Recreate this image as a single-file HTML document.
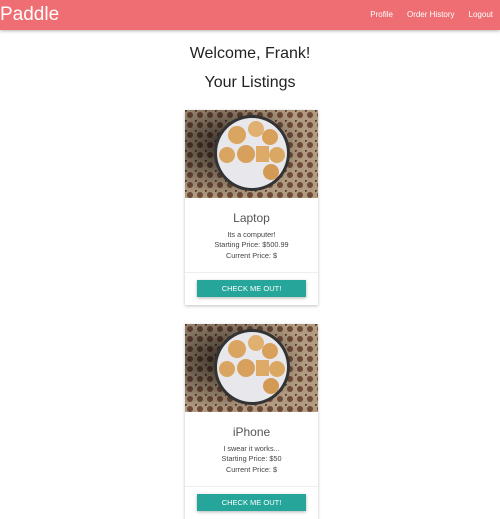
<!DOCTYPE html>
<html><head><style>
*{margin:0;padding:0;box-sizing:border-box}
body{width:500px;height:500px;overflow:hidden;background:#fff;font-family:"Liberation Sans",sans-serif;position:relative}
.nav{position:absolute;left:0;top:0;width:500px;height:30px;background:#ee6e73;box-shadow:0 1px 3px rgba(0,0,0,.3);color:#fff}
.brand{position:absolute;left:0;top:4px;font-size:19px}
.links{position:absolute;right:7px;top:10px;font-size:8px}
.links span{margin-left:14px}
h1{position:absolute;width:500px;text-align:center;font-weight:normal;font-size:16px;color:#222}
.card{position:absolute;left:185px;width:133px;height:195px;box-shadow:0 1px 3px rgba(0,0,0,.25);background:#fff}
.card svg{display:block}
.t{position:absolute;width:100%;text-align:center;color:#555;font-size:12px}
.l{position:absolute;width:100%;text-align:center;color:#444;font-size:7.3px}
.div{position:absolute;left:0;width:100%;border-top:1px solid #eee}
.btn{position:absolute;left:12px;width:109px;height:17px;background:#26a69a;color:#fff;font-size:7.5px;text-align:center;line-height:17px;box-shadow:0 1px 3px rgba(0,0,0,.3)}
</style></head><body>
<div class="nav"><div class="brand">Paddle</div><div class="links"><span>Profile</span><span>Order History</span><span>Logout</span></div></div>
<h1 style="top:45px">Welcome, Frank!</h1>
<h1 style="top:74px">Your Listings</h1>

<div class="card" style="top:110px">
<svg width="133" height="88"><defs><pattern id="p" width="10" height="10" patternUnits="userSpaceOnUse"><rect width="10" height="10" fill="#b09a80"/><circle cx="5" cy="5" r="3" fill="#6e4a38"/><circle cx="0" cy="0" r="2" fill="#5a3c2e"/></pattern><radialGradient id="g" cx="0.3" cy="0.4" r="0.6"><stop offset="0" stop-color="#000" stop-opacity=".7"/><stop offset="1" stop-color="#000" stop-opacity="0"/></radialGradient></defs>
<rect width="133" height="88" fill="url(#p)"/><rect width="133" height="88" fill="url(#g)"/>
<circle cx="67" cy="43" r="38" fill="#333"/><circle cx="67" cy="43" r="35" fill="#e8e8ec"/>
<circle cx="52" cy="25" r="9" fill="#d9a560"/><circle cx="71" cy="19" r="8" fill="#e0b070"/><circle cx="85" cy="27" r="8" fill="#d8a05a"/><circle cx="92" cy="45" r="8" fill="#dba864"/><circle cx="86" cy="62" r="8" fill="#d39a55"/><circle cx="61" cy="44" r="9" fill="#d7a05c"/><rect x="71" y="36" width="13" height="16" fill="#deaa68"/><circle cx="42" cy="45" r="8" fill="#d9a560"/></svg>
<div class="t" style="top:101px">Laptop</div>
<div class="l" style="top:120px">Its a computer!</div>
<div class="l" style="top:130px">Starting Price: $500.99</div>
<div class="l" style="top:141px">Current Price: $</div>
<div class="div" style="top:162px"></div>
<div class="btn" style="top:170px">CHECK ME OUT!</div>
</div>

<div class="card" style="top:324px">
<svg width="133" height="88"><rect width="133" height="88" fill="url(#p)"/><rect width="133" height="88" fill="url(#g)"/>
<circle cx="67" cy="43" r="38" fill="#333"/><circle cx="67" cy="43" r="35" fill="#e8e8ec"/>
<circle cx="52" cy="25" r="9" fill="#d9a560"/><circle cx="71" cy="19" r="8" fill="#e0b070"/><circle cx="85" cy="27" r="8" fill="#d8a05a"/><circle cx="92" cy="45" r="8" fill="#dba864"/><circle cx="86" cy="62" r="8" fill="#d39a55"/><circle cx="61" cy="44" r="9" fill="#d7a05c"/><rect x="71" y="36" width="13" height="16" fill="#deaa68"/><circle cx="42" cy="45" r="8" fill="#d9a560"/></svg>
<div class="t" style="top:101px">iPhone</div>
<div class="l" style="top:120px">I swear it works...</div>
<div class="l" style="top:130px">Starting Price: $50</div>
<div class="l" style="top:141px">Current Price: $</div>
<div class="div" style="top:162px"></div>
<div class="btn" style="top:170px">CHECK ME OUT!</div>
</div>
</body></html>
